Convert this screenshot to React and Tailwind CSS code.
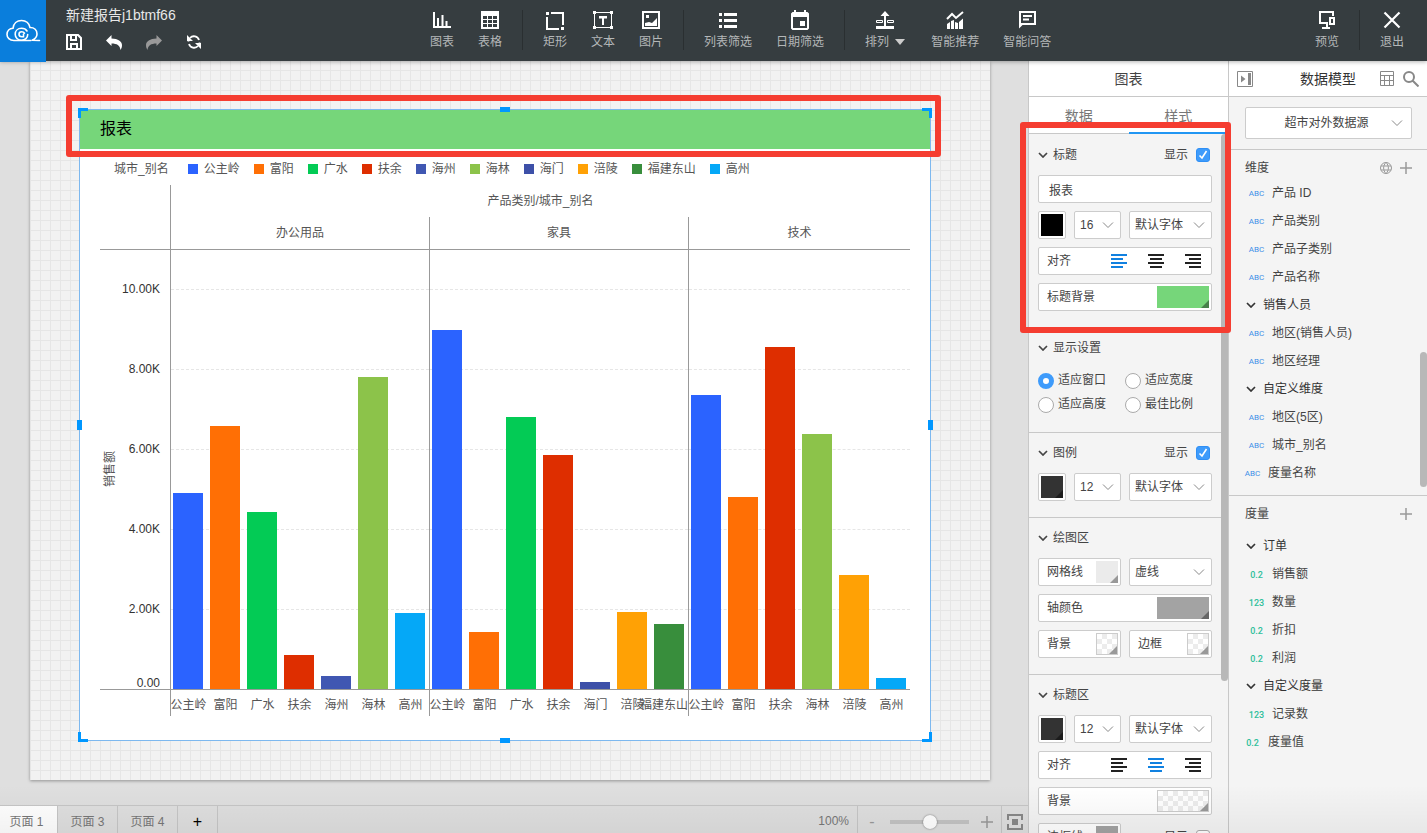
import React, { useState } from 'react';
import clsx from 'clsx';

const COLORS = {
  公主岭: 'bg-[#2b63ff]',
  富阳: 'bg-[#ff6f05]',
  广水: 'bg-[#03cb55]',
  扶余: 'bg-[#de2e00]',
  海州: 'bg-[#4057b2]',
  海林: 'bg-[#8cc34a]',
  海门: 'bg-[#3d50a8]',
  涪陵: 'bg-[#ffa105]',
  福建东山: 'bg-[#388e3c]',
  高州: 'bg-[#05a8f7]',
};

const AXIS_MAX = 10975;
const TICKS = ['10.00K', '8.00K', '6.00K', '4.00K', '2.00K'];

const GROUPS = [
  {
    name: '办公用品',
    grow: 'grow-7',
    bars: [['公主岭', 4900], ['富阳', 6575], ['广水', 4425], ['扶余', 850], ['海州', 325], ['海林', 7800], ['高州', 1900]],
  },
  {
    name: '家具',
    grow: 'grow-7',
    bars: [['公主岭', 8975], ['富阳', 1425], ['广水', 6800], ['扶余', 5850], ['海门', 175], ['涪陵', 1925], ['福建东山', 1625]],
  },
  {
    name: '技术',
    grow: 'grow-6',
    bars: [['公主岭', 7350], ['富阳', 4800], ['扶余', 8550], ['海林', 6375], ['涪陵', 2850], ['高州', 275]],
  },
];

const DIMENSIONS = [
  { type: 'ABC', label: '产品 ID' },
  { type: 'ABC', label: '产品类别' },
  { type: 'ABC', label: '产品子类别' },
  { type: 'ABC', label: '产品名称' },
  { type: 'group', label: '销售人员' },
  { type: 'ABC', label: '地区(销售人员)' },
  { type: 'ABC', label: '地区经理' },
  { type: 'group', label: '自定义维度' },
  { type: 'ABC', label: '地区(5区)' },
  { type: 'ABC', label: '城市_别名' },
  { type: 'ABC', label: '度量名称', root: true },
];

const MEASURES = [
  { type: 'group', label: '订单' },
  { type: '0.2', label: '销售额' },
  { type: '123', label: '数量' },
  { type: '0.2', label: '折扣' },
  { type: '0.2', label: '利润' },
  { type: 'group', label: '自定义度量' },
  { type: '123', label: '记录数' },
  { type: '0.2', label: '度量值', root: true },
];

/* ---------- icons ---------- */

const Svg = ({ size = 'size-5', box = 20, children }) => (
  <svg viewBox={`0 0 ${box} ${box}`} className={clsx('block shrink-0', size)} fill="currentColor" aria-hidden="true">
    {children}
  </svg>
);

const ChartIcon = () => (
  <Svg><path d="M1 2h2v14h16v2H1zM5 8h2v8H5zM9.500 5h2v11h-2zM13.500 11h2v5h-2z" /></Svg>
);
const TableIcon = () => (
  <Svg>
    <path fillRule="evenodd" d="M1 1h18v18H1zM3 6v3h4V6zM8 6v3h4V6zM13 6v3h4V6zM3 10v3h4v-3zM8 10v3h4v-3zM13 10v3h4v-3zM3 14v3h4v-3zM8 14v3h4v-3zM13 14v3h4v-3z" />
  </Svg>
);
const RectIcon = () => (
  <Svg><path d="M1 2h3v3H1zM6 2h13v13h-2V4H6zM1 7h2v11h11v2H1zM16 17h3v3h-3z" /></Svg>
);
const TextIcon = () => (
  <Svg>
    <path d="M1.500 2.500h17v15h-17z" fill="none" stroke="currentColor" />
    <path d="M0 1h3v3H0zM17 1h3v3h-3zM0 16h3v3H0zM17 16h3v3h-3zM6 6h8v2.500h-3V15H9V8.500H6z" />
  </Svg>
);
const ImageIcon = () => (
  <Svg>
    <path fillRule="evenodd" d="M1 1h18v18H1zM3 3v14h14V3z" />
    <path d="M5 5h3v3H5zM4 16v-3l4-1 3 1 5-5v8z" />
  </Svg>
);
const ListIcon = () => (
  <Svg><path d="M1 3h3v3H1zM6 3h13v3H6zM1 9h3v3H1zM6 9h13v3H6zM1 15h3v3H1zM6 15h13v3H6z" /></Svg>
);
const CalendarIcon = () => (
  <Svg>
    <path fillRule="evenodd" d="M4 0h2v2h8V0h2v2h1.500L19 3.500v15L17.500 20h-15L1 18.500v-15L2.500 2H4zM3 7v11h14V7z" />
    <path d="M10 11h5v5h-5z" />
  </Svg>
);
const ArrangeIcon = () => (
  <Svg>
    <path d="M10 1l4.500 5H11v10h8v3H1v-3h8V6H5.500z" />
    <path d="M1.500 10.500h6v2h-6zM12.500 10.500h6v2h-6z" fill="none" stroke="currentColor" />
  </Svg>
);
const RecommendIcon = () => (
  <Svg>
    <path d="M2 9l5-5 4 4 7-6" fill="none" stroke="currentColor" strokeWidth="2" />
    <path d="M2 14l3-2v7H2zM6 11l3-1v9H6zM10 12l3 1v6h-3zM14 12l4-3.500V19h-4z" />
  </Svg>
);
const AnswerIcon = () => (
  <Svg>
    <path fillRule="evenodd" d="M2 1h17v14H5.500L2 18.500zM4 3v10h13V3z" />
    <path d="M6 5h9v2H6zM6 8.500h6v2H6z" />
  </Svg>
);
const PreviewIcon = () => (
  <Svg>
    <path d="M16 6V2H3v11h7v5M5 18h8" fill="none" stroke="currentColor" strokeWidth="2" />
    <path fillRule="evenodd" d="M12 7h6v8h-6zM14 9v4h2V9z" />
  </Svg>
);
const CloseIcon = () => (
  <Svg><path d="M2.500 2.500l15 15M17.500 2.500l-15 15" stroke="currentColor" strokeWidth="2.200" /></Svg>
);

const SaveIcon = () => (
  <Svg size="size-4" box={16}>
    <path fillRule="evenodd" d="M0 0h12.500L16 3.500V16H0zM2 2v12h2V9h8v5h2V4.500L11.500 2H11v5H4V2zM6 2v3h3V2zM6 11v3h4v-3z" />
  </Svg>
);
const UndoIcon = ({ flip }) => (
  <svg viewBox="0 0 16 16" className={clsx('block size-4', flip && '-scale-x-100')} fill="currentColor" aria-hidden="true">
    <path d="M5.500 1v3.500C12 4.500 16 7.500 16 11c0 2-.5 3.500-1.500 5C14 11.500 11 9.500 5.500 9.500V12L0 6.500z" />
  </svg>
);
const RefreshIcon = () => (
  <Svg size="size-4" box={16}>
    <path d="M3 10a5.300 5.300 0 0 0 9 2M13 6A5.300 5.300 0 0 0 4 4M2.500 7.500V5M13.500 8.500V11" fill="none" stroke="currentColor" strokeWidth="1.800" />
    <path d="M1 1v6h6zM15 15V9H9z" />
  </Svg>
);
const CloudLogo = () => (
  <svg viewBox="0 0 36 24" className="w-9" fill="none" stroke="white" strokeWidth="1.600" strokeLinecap="round" aria-hidden="true">
    <path d="M26 21.500H9C4.500 21.500 2 18.500 2 15.500c0-3.500 2.500-6 6-6.200C8.500 4.500 12 1.500 16.500 1.500c4.500 0 7.500 2.500 8.500 7 4.500 0 7 3 7 6.500 0 3-2 5-5 6.300l7.500.2" />
    <path d="M22 12c-1-1.700-3-2.700-5.500-2.700-3.700 0-6.300 2.500-6.300 5.900 0 3.400 2.600 6.100 6.300 6.100 3.600 0 6.200-2.600 6.200-5.800M19.500 14.200c-.6-.9-1.600-1.400-2.800-1.400-1.600 0-2.700 1-2.700 2.500s1.200 2.500 2.800 2.500h1.700v-2.600" />
  </svg>
);

const Chevron = ({ className }) => (
  <svg viewBox="0 0 10 6" className={clsx('h-1.5 w-2.5 shrink-0', className)} fill="none" stroke="currentColor" aria-hidden="true">
    <path d="M1 1l4 4 4-4" strokeWidth="1.700" />
  </svg>
);
const ThinChevron = ({ className = 'right-1.5' }) => (
  <svg viewBox="0 0 12 7" className={clsx('pointer-events-none absolute top-1/2 h-[7px] w-3 -translate-y-1/2 text-[#888]', className)} fill="none" stroke="currentColor" aria-hidden="true">
    <path d="M1 1l5 5 5-5" />
  </svg>
);
const PlusIcon = () => (
  <svg viewBox="0 0 12 12" className="block size-3" stroke="#999" strokeWidth="1.500" aria-hidden="true">
    <path d="M6 0v12M0 6h12" />
  </svg>
);

/* ---------- header ---------- */

const Tool = ({ icon, label, caret }) => (
  <button type="button" className={clsx('flex flex-col items-center gap-1 pt-2.5', caret && 'pr-0.5')}>
    <span className="text-white">{icon}</span>
    <span className="flex items-center gap-1.5 text-xs leading-4">
      {label}
      {caret && (
        <svg viewBox="0 0 10 6" className="h-1.5 w-2.5" fill="#ccc" aria-hidden="true"><path d="M0 0h10L5 6z" /></svg>
      )}
    </span>
  </button>
);

const ToolDivider = () => <span className="mt-2.5 h-10 w-px bg-[#2a2f31]" />;

const Header = () => (
  <header className="relative z-20 flex h-[61px] shrink-0 bg-[#363d40] text-[#b4b7b8] shadow-[0_1px_4px_rgba(0,0,0,0.3)]">
    <a href="#home" aria-label="home" className="flex h-[62px] w-[46px] items-center justify-center bg-[#0a7edc]">
      <CloudLogo />
    </a>
    <div className="w-96 pt-1.5 pl-5 text-white">
      <h1 className="text-sm leading-[18px] text-[#e8e8e8]">新建报告j1btmf66</h1>
      <div className="flex items-center gap-6 pt-2.5">
        <button type="button" aria-label="保存"><SaveIcon /></button>
        <button type="button" aria-label="撤销"><UndoIcon /></button>
        <button type="button" aria-label="重做" className="text-[#999]"><UndoIcon flip /></button>
        <button type="button" aria-label="刷新"><RefreshIcon /></button>
      </div>
    </div>
    <div className="flex items-start gap-5">
      <div className="flex gap-6">
        <Tool icon={<ChartIcon />} label="图表" />
        <Tool icon={<TableIcon />} label="表格" />
      </div>
      <ToolDivider />
      <div className="flex gap-6">
        <Tool icon={<RectIcon />} label="矩形" />
        <Tool icon={<TextIcon />} label="文本" />
        <Tool icon={<ImageIcon />} label="图片" />
      </div>
      <ToolDivider />
      <div className="flex gap-6">
        <Tool icon={<ListIcon />} label="列表筛选" />
        <Tool icon={<CalendarIcon />} label="日期筛选" />
      </div>
      <ToolDivider />
      <div className="flex gap-6">
        <Tool icon={<ArrangeIcon />} label="排列" caret />
        <Tool icon={<RecommendIcon />} label="智能推荐" />
        <Tool icon={<AnswerIcon />} label="智能问答" />
      </div>
    </div>
    <div className="ml-auto flex items-start gap-5 pr-[23px]">
      <Tool icon={<PreviewIcon />} label="预览" />
      <ToolDivider />
      <Tool icon={<CloseIcon />} label="退出" />
    </div>
  </header>
);

/* ---------- report ---------- */

const Legend = () => (
  <div className="flex h-9 shrink-0 items-center gap-3.5 pt-1 pl-[34px]">
    <span className="mr-[5px]">城市_别名</span>
    {Object.entries(COLORS).map(([name, color]) => (
      <span key={name} className="flex items-center gap-1.5 whitespace-nowrap">
        <i className={clsx('size-2.5', color)} />
        {name}
      </span>
    ))}
  </div>
);

const AxisColumn = () => (
  <div className="flex w-[70px] shrink-0 flex-col pt-8">
    <div className="h-[33px] shrink-0 border-b border-[#999]" />
    <div className="flex min-h-0 flex-1 border-b border-[#999]">
      <div className="flex items-center pl-0.5">
        <span className="rotate-180 leading-4 [text-orientation:sideways] [writing-mode:vertical-rl]">销售额</span>
      </div>
      <div className="flex flex-1 flex-col pr-2.5 text-right leading-3 text-[#333]">
        <div className="grow-[39] basis-0" />
        {TICKS.map((tick, i) => (
          <div key={tick} className="flex grow-[80] basis-0 flex-col justify-between">
            <span className="-mt-1.5">{tick}</span>
            {i === TICKS.length - 1 && <span>0.00</span>}
          </div>
        ))}
      </div>
    </div>
    <div className="h-[26px] shrink-0" />
  </div>
);

const GridLines = () => (
  <div className="absolute inset-0 flex flex-col">
    <div className="grow-[39] basis-0" />
    {TICKS.map((tick) => (
      <div key={tick} className="grow-[80] basis-0 border-t border-dashed border-[#e6e6e6]" />
    ))}
  </div>
);

const BarGroup = ({ group }) => (
  <div className={clsx('flex min-w-0 basis-0 flex-col border-l border-[#999]', group.grow)}>
    <div className="h-[33px] shrink-0 border-b border-[#999] text-center leading-8">{group.name}</div>
    <div className="relative min-h-0 flex-1 border-b border-[#999]">
      <GridLines />
      <div className="relative -ml-px flex h-full items-end">
        {group.bars.map(([name, value]) => (
          <div key={name} className="flex h-full flex-1 items-end pl-[3px]">
            <div className={clsx('w-[30px]', COLORS[name])} style={{ height: `${(value / AXIS_MAX) * 100}%` }} />
          </div>
        ))}
      </div>
    </div>
    {/* wide labels grow to the left so they stay inside their group */}
    <div className="-ml-px flex h-[26px] shrink-0">
      {group.bars.map(([name]) => (
        <span key={name} className={clsx('flex w-0 flex-1 whitespace-nowrap leading-[30px]', name.length > 3 ? 'justify-end' : 'justify-center')}>
          {name}
        </span>
      ))}
    </div>
  </div>
);

const Handles = () => (
  <>
    <i className="absolute -top-0.5 -left-0.5 size-2.5 border-t-3 border-l-3 border-[#0097ff]" />
    <i className="absolute -top-0.5 -right-0.5 size-2.5 border-t-3 border-r-3 border-[#0097ff]" />
    <i className="absolute -bottom-0.5 -left-0.5 size-2.5 border-b-3 border-l-3 border-[#0097ff]" />
    <i className="absolute -right-0.5 -bottom-0.5 size-2.5 border-r-3 border-b-3 border-[#0097ff]" />
    <i className="absolute -top-[3px] left-1/2 h-[5px] w-2.5 -translate-x-1/2 bg-[#0097ff]" />
    <i className="absolute -bottom-[3px] left-1/2 h-[5px] w-2.5 -translate-x-1/2 bg-[#0097ff]" />
    <i className="absolute top-1/2 -left-[3px] h-2.5 w-[5px] -translate-y-1/2 bg-[#0097ff]" />
    <i className="absolute top-1/2 -right-[3px] h-2.5 w-[5px] -translate-y-1/2 bg-[#0097ff]" />
  </>
);

const ReportCard = () => (
  <section className="relative flex min-h-0 flex-1 flex-col border border-[#7db8ef] bg-white text-[#555]">
    <h2 className="h-[39px] shrink-0 bg-[#76d67a] px-5 text-base leading-[38px] text-black">报表</h2>
    <Legend />
    <div className="flex min-h-0 flex-1 px-5 pb-6">
      <AxisColumn />
      <div className="flex min-w-0 flex-1 flex-col">
        <div className="h-8 shrink-0 border-l border-[#999] text-center leading-8">产品类别/城市_别名</div>
        <div className="flex min-h-0 flex-1">
          {GROUPS.map((group) => <BarGroup key={group.name} group={group} />)}
        </div>
      </div>
    </div>
    <Handles />
    <div className="absolute -top-[15px] -right-[11px] -left-3.5 h-[62px] rounded-[3px] border-6 border-[#f53d31]" />
  </section>
);

const PageTab = ({ active, children }) => (
  <button type="button" className={clsx('border-r border-[#c6c6c6] pt-1 text-center', active ? 'w-[58px] bg-white pr-1' : 'w-[60px]')}>
    {children}
  </button>
);

const Footer = () => (
  <footer className="flex h-7 shrink-0 border-t border-[#c6c6c6] bg-[#dfdfdf] text-[#777]">
    <PageTab active>页面 1</PageTab>
    <PageTab>页面 3</PageTab>
    <PageTab>页面 4</PageTab>
    <button type="button" aria-label="添加页面" className="w-10 border-r border-[#c6c6c6] pt-1 text-center text-base text-black">+</button>
    <div className="ml-auto flex">
      <span className="pt-[7px] pr-2">100%</span>
      <div className="flex items-center gap-3 border-x border-[#c6c6c6] px-2 pt-1">
        <button type="button" aria-label="缩小" className="w-3 text-center text-base leading-4 text-[#999]">-</button>
        <input
          type="range"
          aria-label="缩放"
          defaultValue="50"
          className="h-4 w-[79px] appearance-none bg-transparent [&::-webkit-slider-runnable-track]:h-1 [&::-webkit-slider-runnable-track]:bg-[#c3c3c3] [&::-webkit-slider-thumb]:-mt-[5px] [&::-webkit-slider-thumb]:size-3.5 [&::-webkit-slider-thumb]:appearance-none [&::-webkit-slider-thumb]:rounded-full [&::-webkit-slider-thumb]:bg-white [&::-webkit-slider-thumb]:shadow-[0_0_2px_rgba(0,0,0,0.5)]"
        />
        <button type="button" aria-label="放大"><PlusIcon /></button>
      </div>
      <button type="button" aria-label="适应屏幕" className="px-[5px] pt-1 text-[#888]">
        <Svg size="size-4" box={16}>
          <path d="M1 6V1h14v5M1 10v5h14v-5" fill="none" stroke="currentColor" strokeWidth="2" />
          <path d="M5 5h6v6H5z" />
        </Svg>
      </button>
    </div>
  </footer>
);

const Workspace = () => (
  <main className="flex min-w-0 flex-1 flex-col bg-[#dfdfdf]">
    <div className="flex min-h-0 flex-1 flex-col pr-[38px] pb-[25px] pl-[30px]">
      <div className="flex min-h-0 flex-1 flex-col bg-[#f2f2f2] bg-[linear-gradient(#e6e6e6_1px,transparent_1px),linear-gradient(90deg,#e6e6e6_1px,transparent_1px)] bg-[size:10px_10px] bg-[position:0_-1px] pt-12 pr-[59px] pb-[39px] pl-[49px] shadow-[0_1px_3px_rgba(0,0,0,0.35)]">
        <ReportCard />
      </div>
    </div>
    <Footer />
  </main>
);

/* ---------- style panel ---------- */

const FIELD = 'flex h-7 items-center rounded-[2px] border border-[#ccc] bg-white';
const CHECKER = 'border border-[#ccc] bg-[repeating-conic-gradient(#ececec_0_25%,#fff_0_50%)] bg-[size:10px_10px]';

const Select = ({ label, options, width }) => (
  <div className={clsx(FIELD, 'relative', width)}>
    <select aria-label={label} className="h-full w-full appearance-none bg-transparent pl-[5px] outline-none">
      {options.map((o) => <option key={o}>{o}</option>)}
    </select>
    <ThinChevron />
  </div>
);

const Swatch = ({ label, color, width = 'w-[22px]', corner = 'text-[#999]' }) => (
  <button type="button" aria-label={label} className={clsx('flex h-[22px] items-end justify-end', width, color)}>
    <svg viewBox="0 0 8 8" className={clsx('size-2', corner)} fill="currentColor" aria-hidden="true"><path d="M8 0v8H0z" /></svg>
  </button>
);

const ColorField = ({ label, swatch, className }) => (
  <div className={clsx(FIELD, 'justify-between pr-[2px] pl-2', className)}>
    <span className="whitespace-nowrap">{label}</span>
    {swatch}
  </div>
);

const AlignField = ({ initial }) => {
  const [align, setAlign] = useState(initial);
  const lines = {
    left: 'M0 1h16M0 5h12M0 9h16M0 13h12',
    center: 'M0 1h16M2 5h12M0 9h16M2 13h12',
    right: 'M0 1h16M4 5h12M0 9h16M4 13h12',
  };
  return (
    <div className={clsx(FIELD, 'justify-between pr-2.5 pl-2')}>
      <span>对齐</span>
      <div className="flex gap-[21px]">
        {Object.keys(lines).map((key) => (
          <button key={key} type="button" aria-label={key} onClick={() => setAlign(key)} className={align === key ? 'text-[#1181e0]' : 'text-[#222]'}>
            <svg viewBox="0 0 16 14" className="block h-3.5 w-4" stroke="currentColor" strokeWidth="2" aria-hidden="true"><path d={lines[key]} /></svg>
          </button>
        ))}
      </div>
    </div>
  );
};

const Check = ({ checked = true }) => (
  <label className="flex items-center gap-2">
    显示
    <span className="relative mr-0.5 size-3.5">
      <input type="checkbox" defaultChecked={checked} className="peer block size-3.5 appearance-none rounded-[3px] border border-[#aaa] bg-white checked:border-[#2f8ff5] checked:bg-[#3e9bfb]" />
      <svg viewBox="0 0 14 14" className="pointer-events-none absolute inset-0 hidden size-3.5 peer-checked:block" fill="none" stroke="white" strokeWidth="1.600" aria-hidden="true">
        <path d="M3.500 7.500L6 10l4.500-7" />
      </svg>
    </span>
  </label>
);

const Section = ({ title, check, first, children }) => (
  <section className={clsx('border-t pt-2.5 pr-[9px] pb-4 pl-[9px]', first ? 'border-transparent' : 'border-[#c8c8c8]')}>
    <div className="mb-2.5 flex h-5 items-center justify-between">
      <h3 className="flex items-center gap-[5px]"><Chevron />{title}</h3>
      {check && <Check />}
    </div>
    <div className="flex flex-col gap-2">{children}</div>
  </section>
);

const FontRow = ({ size, color, corner }) => (
  <div className="flex gap-2">
    <div className={clsx(FIELD, 'w-7 justify-center')}><Swatch label="字体颜色" color={color} corner={corner} /></div>
    <Select label="字号" options={[size]} width="w-[47px]" />
    <Select label="字体" options={['默认字体']} width="flex-1" />
  </div>
);

const Radio = ({ label, checked }) => (
  <label className="flex h-6 items-center gap-1">
    <input
      type="radio"
      name="fit"
      defaultChecked={checked}
      className="mt-0.5 size-4 appearance-none rounded-full border border-[#aaa] bg-white checked:border-[5px] checked:border-[#3e9bfb]"
    />
    {label}
  </label>
);

const StylePanel = () => (
  <aside className="relative z-10 flex w-[200px] shrink-0 flex-col border-l border-[#c8c8c8] bg-[#f4f4f4]">
    <h2 className="h-9 shrink-0 border-b border-[#c8c8c8] bg-white text-center text-sm leading-9">图表</h2>
    <div className="flex h-[37px] shrink-0 bg-white text-sm text-[#777] shadow-[inset_0_-1px_0_#c8c8c8]">
      <button type="button" className="flex-1">数据</button>
      <button type="button" className="flex-1 border-b-2 border-[#2196f3] pt-0.5">样式</button>
    </div>
    <div className="relative min-h-0 flex-1 overflow-hidden pr-[7px]">
      <Section title="标题" check first>
        <input type="text" aria-label="标题" defaultValue="报表" className={clsx(FIELD, 'w-full px-2.5 outline-none')} />
        <FontRow size="16" color="bg-black" corner="text-black" />
        <AlignField initial="left" />
        <ColorField label="标题背景" swatch={<Swatch label="标题背景" color="bg-[#76d67a]" width="w-[52px]" corner="text-[#47804a]" />} />
      </Section>
      <Section title="显示设置">
        <div className="grid grid-cols-2">
          <Radio label="适应窗口" checked />
          <Radio label="适应宽度" />
          <Radio label="适应高度" />
          <Radio label="最佳比例" />
        </div>
      </Section>
      <Section title="图例" check>
        <FontRow size="12" color="bg-[#333]" corner="text-[#1c1c1c]" />
      </Section>
      <Section title="绘图区">
        <div className="grid grid-cols-2 gap-2">
          <ColorField label="网格线" swatch={<Swatch label="网格线" color="bg-[#ebebeb]" />} />
          <Select label="线型" options={['虚线']} />
        </div>
        <ColorField label="轴颜色" swatch={<Swatch label="轴颜色" color="bg-[#a3a3a3]" width="w-[52px]" corner="text-[#666]" />} />
        <div className="grid grid-cols-2 gap-2">
          <ColorField label="背景" swatch={<Swatch label="背景" color={CHECKER} />} />
          <ColorField label="边框" swatch={<Swatch label="边框" color={CHECKER} />} />
        </div>
      </Section>
      <Section title="标题区">
        <FontRow size="12" color="bg-[#333]" corner="text-[#1c1c1c]" />
        <AlignField initial="center" />
        <ColorField label="背景" swatch={<Swatch label="背景" color={CHECKER} width="w-[52px]" />} />
        <div className="flex items-center justify-between">
          <ColorField className="w-[83px]" label="边框线" swatch={<Swatch label="边框线" color="bg-[#a3a3a3]" />} />
          <Check checked={false} />
        </div>
      </Section>
      <div className="absolute top-0 right-0 h-[547px] w-[7px] rounded-full bg-[#b8b8b8]" />
    </div>
    <div className="absolute top-[61px] -right-[3px] -left-[9px] h-[211px] rounded-[3px] border-6 border-[#f53d31]" />
  </aside>
);

/* ---------- data model panel ---------- */

const FieldRow = ({ field }) => {
  if (field.type === 'group') {
    return (
      <li className="flex h-7 items-center gap-[7px] pl-[17px] text-[#333]"><Chevron />{field.label}</li>
    );
  }
  return (
    <li className={clsx('flex h-7 items-center gap-2', field.root ? 'pl-4' : 'pl-5')}>
      <span
        className={clsx(
          "flex w-[15px] justify-center pt-0.5 font-['Roboto',sans-serif]",
          field.type === 'ABC' ? 'text-[8px] text-[#3d8fe8]' : 'text-[9px] font-medium text-[#2fbf9b]',
        )}
      >
        {field.type}
      </span>
      {field.label}
    </li>
  );
};

const ModelPanel = () => (
  <aside className="flex w-[199px] shrink-0 flex-col border-l border-[#c8c8c8] bg-[#f4f4f4]">
    <div className="flex h-9 shrink-0 items-center justify-between border-b border-[#c8c8c8] bg-white px-2 text-[#888]">
      <button type="button" aria-label="收起">
        <Svg size="size-4" box={16}>
          <path d="M.5.5h15v15H.5z" fill="none" stroke="currentColor" />
          <path d="M4 4.500l4.500 3.500L4 11.500zM11 2h3v12h-3z" />
        </Svg>
      </button>
      <h2 className="pl-6 text-sm text-[#333]">数据模型</h2>
      <div className="flex items-center gap-2">
        <button type="button" aria-label="表格视图">
          <Svg size="size-4" box={16}>
            <path d="M1.500.5h13v14h-13zM1.500 4.500h13M1.500 9.500h13M5.500 4.500v10M10.500 4.500v10" fill="none" stroke="currentColor" />
          </Svg>
        </button>
        <button type="button" aria-label="搜索">
          <Svg size="size-4" box={16}>
            <path d="M11 6a5 5 0 1 1-10 0a5 5 0 0 1 10 0zM9.500 9.500L15.500 15.500" fill="none" stroke="currentColor" strokeWidth="2" />
          </Svg>
        </button>
      </div>
    </div>
    <div className="relative min-h-0 flex-1">
      <div className="border-b border-[#c8c8c8] py-2.5 pr-[15px] pl-4">
        <div className="relative rounded-[2px] border border-[#ccc] bg-white">
          <select aria-label="数据源" className="block h-[30px] w-full appearance-none bg-transparent pr-3 pl-2 text-center outline-none">
            <option>超市对外数据源</option>
          </select>
          <ThinChevron className="right-2" />
        </div>
      </div>
      <div className="flex h-[29px] items-center justify-between pt-1.5 pr-[15px] pl-4">
        <h3>维度</h3>
        <div className="flex items-center gap-2">
          <button type="button" aria-label="地理">
            <Svg size="size-3" box={12}>
              <path d="M6 .5a5.500 5.500 0 1 0 0 11a5.500 5.500 0 1 0 0-11c-3.200 3-3.200 8 0 11c3.200-3 3.200-8 0-11M1 4h10M1 8h10" fill="none" stroke="#999" />
            </Svg>
          </button>
          <button type="button" aria-label="添加维度"><PlusIcon /></button>
        </div>
      </div>
      <ul>{DIMENSIONS.map((f) => <FieldRow key={f.label} field={f} />)}</ul>
      <div className="mt-2 flex h-[37px] items-center justify-between border-t border-[#c8c8c8] pr-[15px] pl-4">
        <h3>度量</h3>
        <button type="button" aria-label="添加度量"><PlusIcon /></button>
      </div>
      <ul>{MEASURES.map((f) => <FieldRow key={f.label} field={f} />)}</ul>
      <div className="absolute top-[255px] right-0 h-[135px] w-[7px] rounded-full bg-[#b8b8b8]" />
    </div>
  </aside>
);

export default function App() {
  return (
    <div className="relative flex h-screen flex-col overflow-hidden font-['Liberation_Sans','Noto_Sans_CJK_SC',sans-serif] text-xs text-[#444]">
      <Header />
      <div className="flex min-h-0 flex-1">
        <Workspace />
        <StylePanel />
        <ModelPanel />
      </div>
      <div className="pointer-events-none absolute inset-x-0 bottom-0 z-30 h-12 bg-linear-to-b from-transparent to-black/5" />
    </div>
  );
}
